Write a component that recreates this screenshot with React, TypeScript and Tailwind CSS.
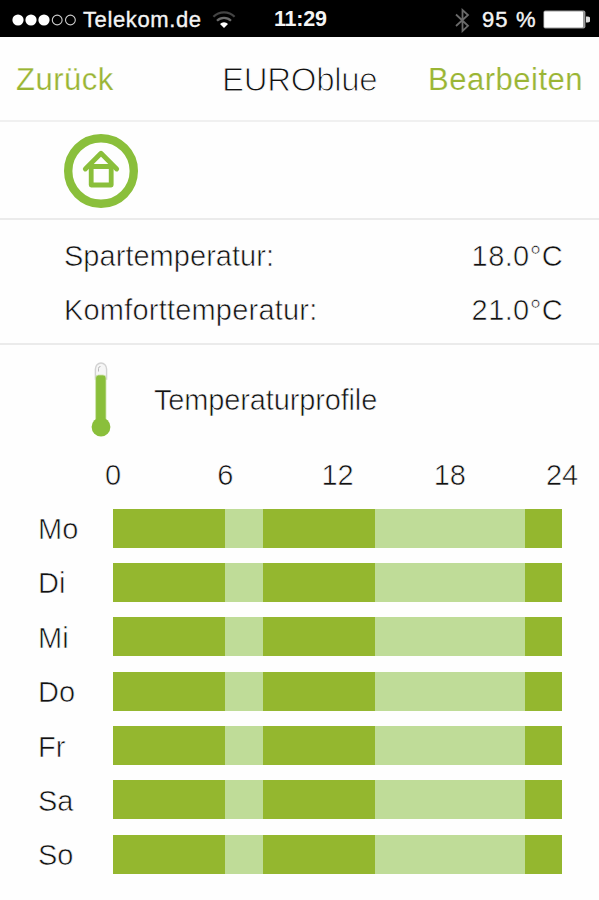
const hours = [0, 6, 12, 18, 24]

// each segment is a length in hours, comfort segments are the light ones
const profile = [
  { hours: 6, comfort: false },
  { hours: 2, comfort: true },
  { hours: 6, comfort: false },
  { hours: 8, comfort: true },
  { hours: 2, comfort: false },
]

const days = ["Mo", "Di", "Mi", "Do", "Fr", "Sa", "So"]

const temperatures = [
  { label: "Spartemperatur:", value: "18.0°C", tracking: "tracking-[0.03px]" },
  { label: "Komforttemperatur:", value: "21.0°C", tracking: "tracking-[0.2px]" },
]

function StatusBar() {
  return (
    <div className="flex h-[37px] items-center bg-black pt-[3px] pl-3 text-[22px] leading-none text-[#f4f4f4]">
      <svg width="65" height="14" viewBox="0 0 65 14" className="shrink-0">
        <circle cx="6" cy="7" r="5.6" fill="#fff" />
        <circle cx="19" cy="7" r="5.6" fill="#fff" />
        <circle cx="32" cy="7" r="5.6" fill="#fff" />
        <circle cx="45.2" cy="7" r="4.9" fill="none" stroke="#ccc" strokeWidth="1.1" />
        <circle cx="58.4" cy="7" r="4.9" fill="none" stroke="#ccc" strokeWidth="1.1" />
      </svg>
      <div className="ml-[6px] w-[129px] tracking-[0.62px] [-webkit-text-stroke:0.35px_#f4f4f4]">Telekom.de</div>
      <svg width="24" height="18" viewBox="0 0 24 18" className="shrink-0" fill="none">
        <path d="M1.4 5.8a15 15 0 0 1 21.2 0" stroke="#444" strokeWidth="2.2" />
        <path d="M5 9.8a9.9 9.9 0 0 1 14 0" stroke="#6c6c6c" strokeWidth="2.2" />
        <path d="M8 12.9a5.7 5.7 0 0 1 8 0L12 17z" fill="#fff" />
      </svg>
      <div className="ml-[38px] w-[180px] text-[21.5px] font-bold tracking-[-0.2px]">11:29</div>
      <svg width="16" height="25" viewBox="0 0 16 25" className="shrink-0" fill="none" stroke="#6a6a6a" strokeWidth="1.8">
        <path d="M2 6.5 14 17.8 8.5 23V2l5.5 5L2 18" />
      </svg>
      <div className="ml-[12px] w-[61px] text-[22px] tracking-[1.1px] whitespace-nowrap [-webkit-text-stroke:0.4px_#f4f4f4]">95 %</div>
      <svg width="47" height="20" viewBox="0 0 47 20" className="shrink-0">
        <rect x="0.4" y="0.6" width="42" height="18" rx="2" fill="#999" />
        <rect x="1.2" y="1.6" width="38.8" height="16" rx="1" fill="#fff" />
        <path d="M43 6.5h1.5a2.8 2.8 0 0 1 0 6H43z" fill="#ddd" />
      </svg>
    </div>
  )
}

function HouseIcon() {
  return (
    <svg width="76" height="76" viewBox="0 0 76 76" fill="none" stroke="#8abf3b">
      <circle cx="38" cy="38" r="32.8" strokeWidth="8.4" />
      <path d="M22.3 36 38 20.3 53.7 36" strokeWidth="4.8" strokeLinecap="round" strokeLinejoin="round" />
      <path d="M28.2 33.5V52h20V33.5z" strokeWidth="4.8" strokeLinejoin="round" />
    </svg>
  )
}

function Thermometer() {
  return (
    <svg width="24" height="78" viewBox="0 0 24 78">
      <path d="M6.4 18V8a5.6 6 0 0 1 11.2 0v10z" fill="#f6f6f6" stroke="#d2d2d2" strokeWidth="1.4" />
      <path d="M9.5 10.5V7.5a2 2 0 0 1 2-2" fill="none" stroke="#bbb" strokeWidth="1" />
      <rect x="6.6" y="14" width="10.4" height="54" rx="3" fill="#8abf3b" stroke="#cfe3b0" strokeWidth="0.8" />
      <circle cx="12" cy="66" r="9.4" fill="#8abf3b" />
    </svg>
  )
}

export default function App() {
  return (
    <div className="h-[900px] w-[599px] overflow-hidden bg-[#fefefe] font-['Liberation_Sans',sans-serif] text-[29px] leading-none text-[#111]">
      <StatusBar />
      <div className="flex h-[85px] items-center justify-between border-b-2 border-[#f0f0f0] px-4 pt-[2px] text-[31px] text-[#9ab534]">
        <div className="w-[206px] tracking-[0.5px] [-webkit-text-stroke:0.25px_#fefefe]">Zurück</div>
        <h1 className="text-[33px] tracking-[-0.3px] text-[#111] [-webkit-text-stroke:1px_#fefefe]">EUROblue</h1>
        <div className="grow text-right tracking-[0.5px] [-webkit-text-stroke:0.2px_#fefefe]">Bearbeiten</div>
      </div>

      <div className="h-[98px] border-b-2 border-[#ebebeb] pt-[11px] pl-[63px]">
        <HouseIcon />
      </div>

      <div className="flex h-[125px] flex-col gap-[25px] border-b-2 border-[#ebebeb] pt-[22px] pr-[36px] pl-16 [-webkit-text-stroke:0.6px_#fefefe]">
        {temperatures.map(({ label, value, tracking }) => (
          <div key={label} className="flex justify-between">
            <div className={tracking}>{label}</div>
            <div className="tracking-[0.4px]">{value}</div>
          </div>
        ))}
      </div>

      <div className="flex h-[108px] items-center pt-[2px] pl-[89px] [-webkit-text-stroke:0.6px_#fefefe]">
        <Thermometer />
        <h2 className="ml-[41px] tracking-[-0.15px]">Temperaturprofile</h2>
      </div>

      <div className="flex h-[55.5px] w-[562px] justify-between pt-[8px] pl-[113px] [-webkit-text-stroke:0.6px_#fefefe]">
        {hours.map(hour => (
          <div key={hour} className="flex w-0 justify-center">{hour}</div>
        ))}
      </div>

      <div className="flex flex-col gap-[15.4px]">
        {days.map(day => (
          <div key={day} className="flex h-[39px] items-center pl-[38px]">
            <div className="w-[75px] pt-[3px] [-webkit-text-stroke:0.6px_#fefefe]">{day}</div>
            <div className="flex h-full w-[449px]">
              {profile.map((segment, i) => (
                <div
                  key={i}
                  className={segment.comfort ? "bg-[#bfdc98]" : "bg-[#94b72f]"}
                  style={{ width: `${(segment.hours / 24) * 100}%` }}
                />
              ))}
            </div>
          </div>
        ))}
      </div>
    </div>
  )
}
